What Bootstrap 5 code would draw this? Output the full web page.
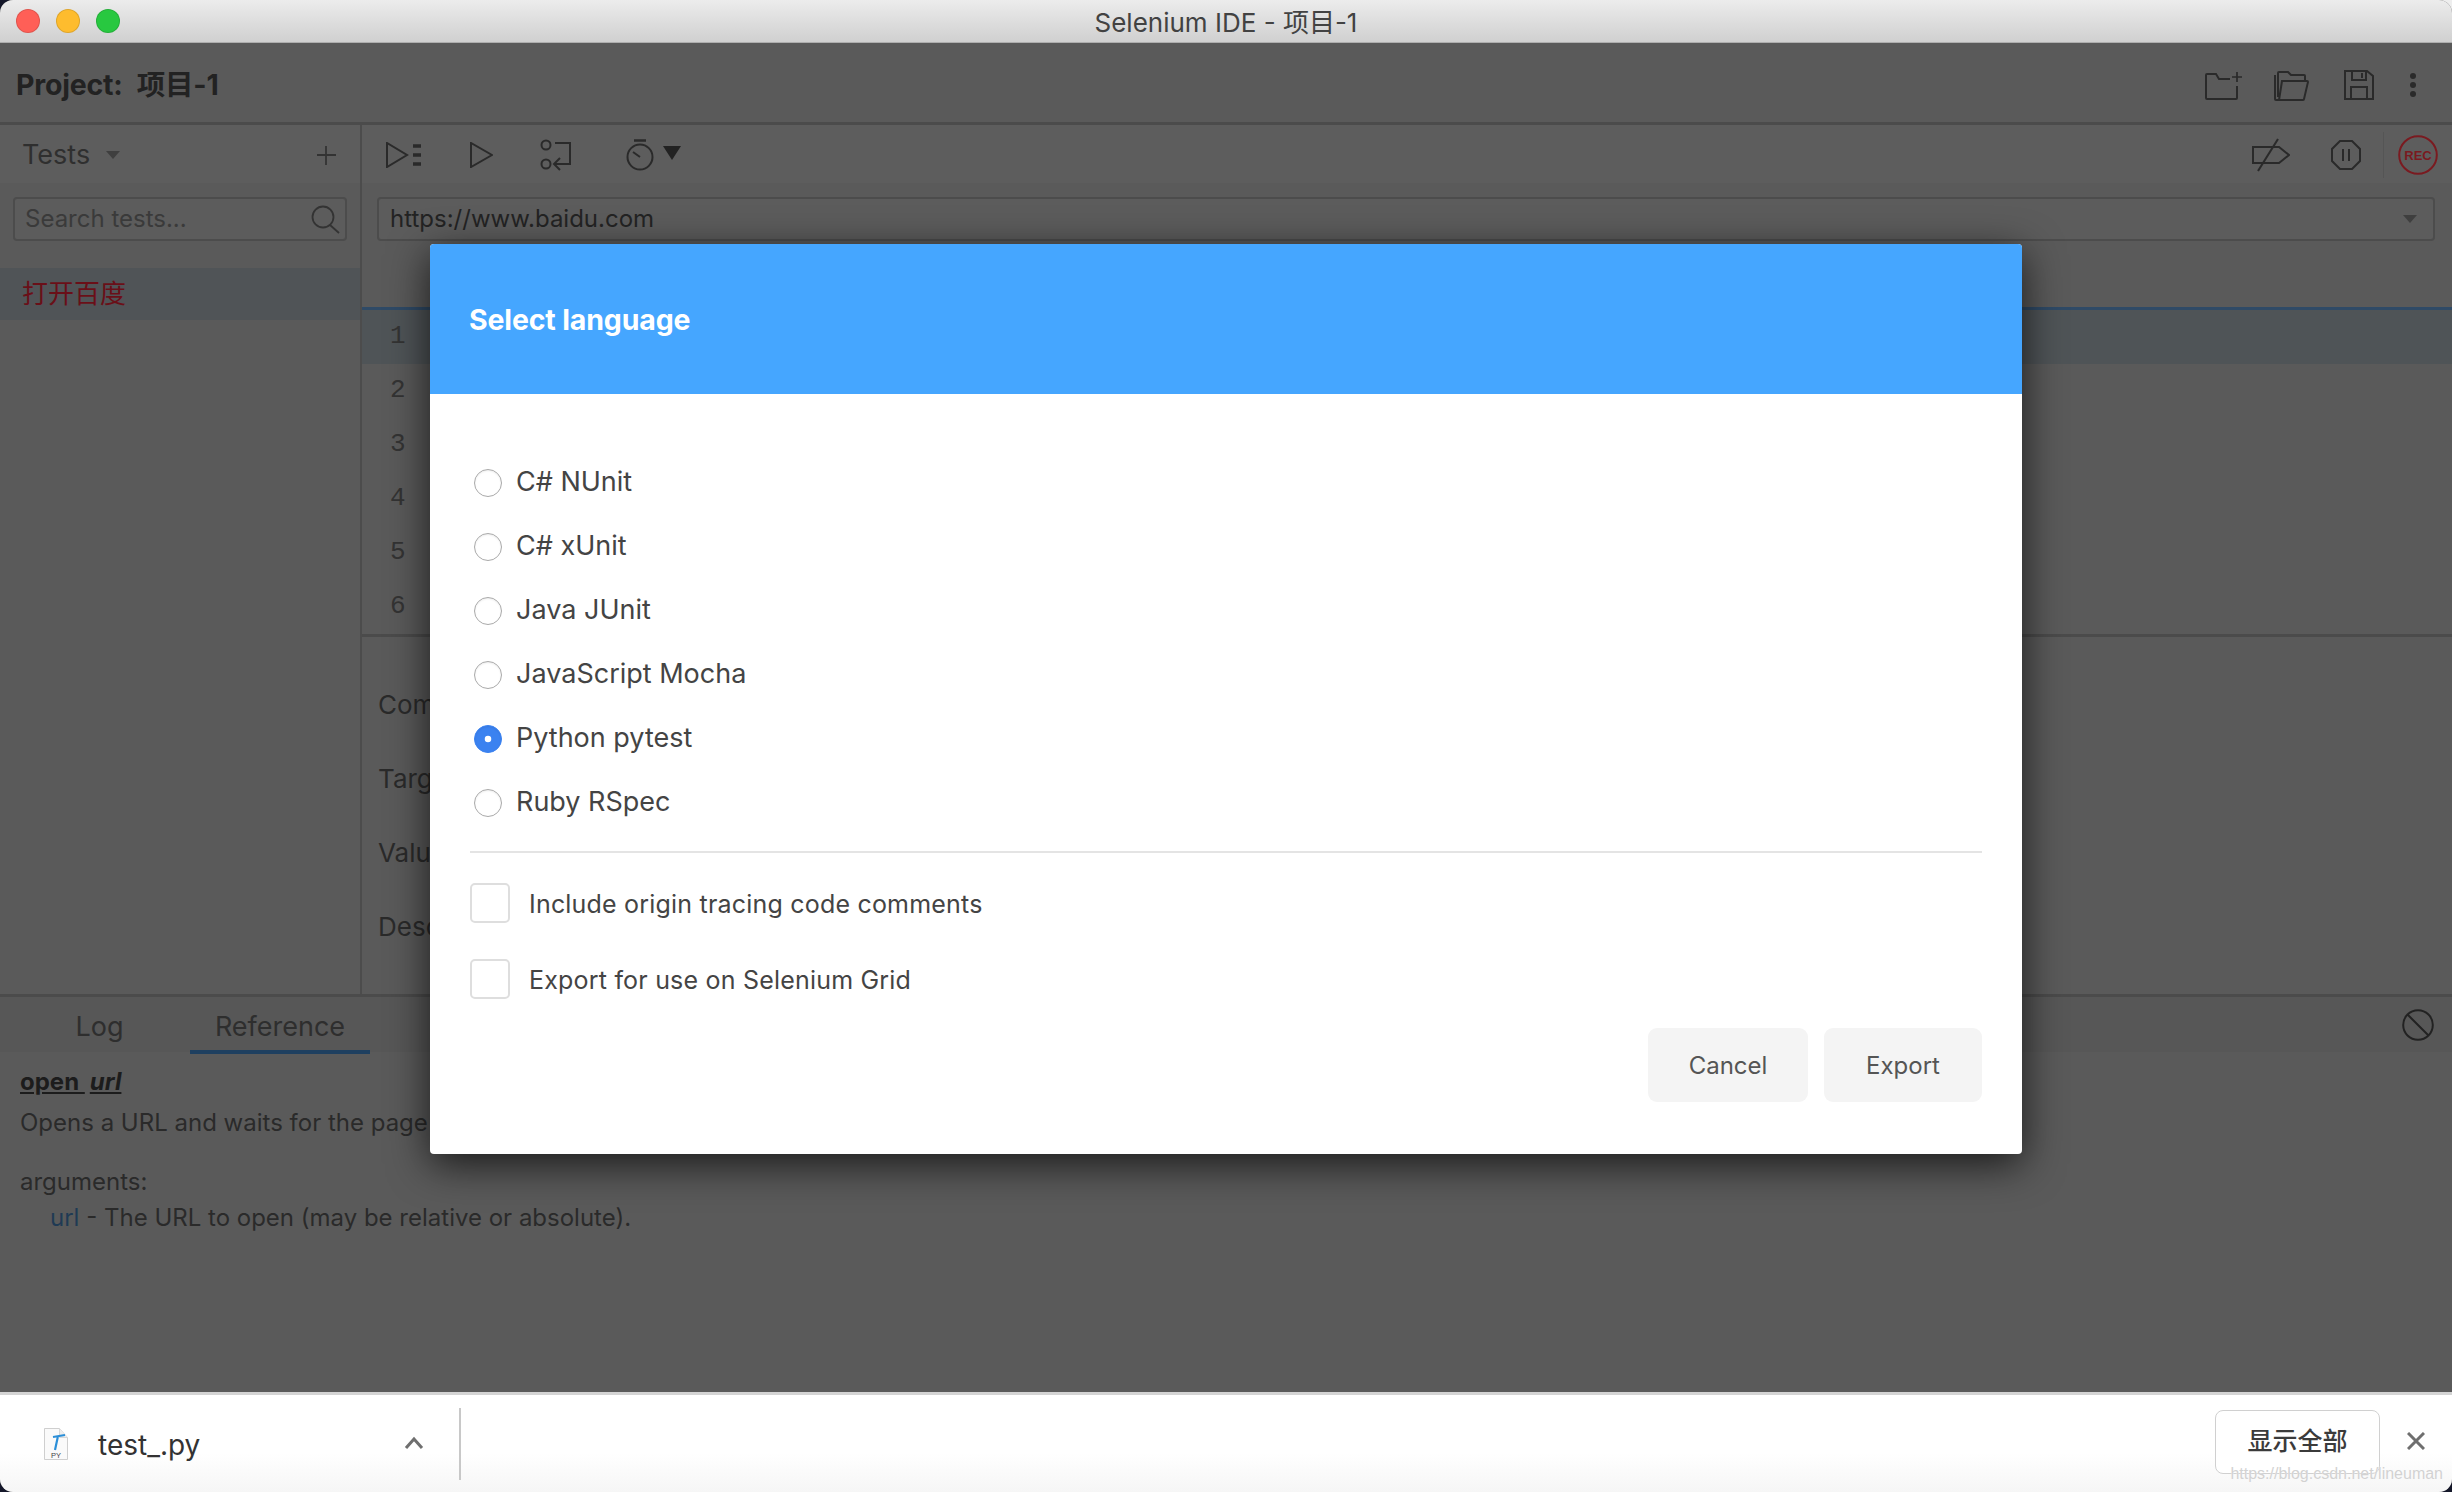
<!DOCTYPE html>
<html lang="zh">
<head>
<meta charset="utf-8">
<title>Selenium IDE - 项目-1</title>
<link href="https://cdn.jsdelivr.net/npm/bootstrap@5.3.0/dist/css/bootstrap.min.css" rel="stylesheet">
<style>
html,body{height:100%}
body{background:linear-gradient(#eee,#eee) right top/20px 20px no-repeat,#15182a;font-family:Inter,"Noto Sans CJK SC",sans-serif;overflow:hidden}
.win{width:2452px;height:1492px;border-radius:13px;overflow:hidden;background:#5a5a5a;position:relative}
.titlebar{height:43px;background:linear-gradient(#ececec,#d0d0d0);border-bottom:1px solid #aeaeae;flex:none}
.lights{width:300px;padding-left:16px;gap:16px}
.light{width:24px;height:24px;border-radius:50%;border:1px solid rgba(0,0,0,.12)}
.titletext{font-size:26px;color:#424242;line-height:43px;padding-top:2px}
.titlespacer{width:300px}
.apphead{height:82px;border-bottom:3px solid #4b4b4b;padding:5px 35px 0 16px;flex:none}
.projname{font-size:28.500px;font-weight:700;color:#222;letter-spacing:-.2px}
.projname span{margin-left:14px}
.hicons{gap:31px}
.ic-save{margin-left:4px}
.ic-dots{margin-left:4px}
.main{flex:1;min-height:0}
.side{width:362px;border-right:2px solid #4c4c4c;flex:none}
.sidebar-top{height:58px;background:#5d5d5d;padding:2px 23px 0 22px;color:#2f2f2f;font-size:27px}
.caret-s{width:0;height:0;border-left:7px solid transparent;border-right:7px solid transparent;border-top:8px solid #3f3f3f}
.inp{height:44px;border:2px solid #4c4c4c;border-radius:4px;font-size:24px;color:#2a2a2a;background:#5c5c5c;padding-top:2px}
.search-wrap{padding:14px 13px 0 13px;height:85px}
.search-in{padding:0 5px 0 10px;color:#3a3a3a}
.testrow{height:52px;background:#505457;color:#6a0f18;font-size:26px;padding-left:22px;line-height:52px}
.edit{min-width:0}
.edit-top{height:58px;background:#5d5d5d;padding:2px 14px 0 24px}
.url-wrap{padding:14px 17px 0 15px;height:67px}
.url-in{padding:0 16px 0 11px;color:#232323}
.cmdhead{height:60px;border-bottom:3px solid #2f4a66;flex:none}
.cmd-rows{height:327px;border-bottom:3px solid #4b4b4b;flex:none}
.cmdrow{height:54px;font-size:26px;color:#333;padding-left:28px;line-height:52px;font-family:"Liberation Mono",monospace}
.cmdrow.on{background:#4f5457}
.fields{padding:54px 0 0 16px;font-size:26px;color:#2a2a2a;gap:46px;line-height:28px}
.logbar{height:58px;background:#575757;border-top:3px solid #4b4b4b;flex:none;padding-right:18px}
.logtab{font-size:27px;color:#2e2e2e;height:58px;line-height:61px;text-align:center}
.logtab.first{width:160px;padding-left:39px}
.logtab.act{margin-left:30px;width:180px;border-bottom:4px solid #1f4060}
.logbody{height:340px;padding:12px 20px 0;font-size:24px;color:#2a2a2a;flex:none}
.logbody p{margin:0}
.refcmd{font-weight:700;text-decoration:underline;color:#1c1c1c;height:40px;line-height:36px}
.refcmd i{margin-left:5px}
.refline{height:38px;line-height:38px}
.logbody .refgap{margin-top:22px;height:36px;line-height:36px}
.refarg{padding-left:30px;line-height:36px}
.refarg span{color:#1f3a54}
.dlbar{height:100px;background:linear-gradient(#fff 60%,#f6f6f6);border-top:3px solid #d4d4d4;flex:none;padding:0 27px 0 44px;position:relative}
.dlname{font-size:28px;color:#333;margin-left:30px;width:306px;padding-top:2px}
.chev{margin-bottom:2px}
.dlsep{width:2px;height:72px;background:#c8c8c8;margin-left:35px}
.showall{width:165px;height:64px;border:1px solid #d0d0d0;border-radius:8px;background:#fff;font-size:25px;font-weight:500;color:#3b3b3b;line-height:57px;text-align:center;font-family:"Noto Sans CJK SC",sans-serif;margin-bottom:4px}
.closex{margin-left:27px;margin-bottom:5px}
.wm{position:absolute;right:9px;bottom:9px;font:16px "Liberation Sans",sans-serif;color:#d2d2d2;text-shadow:0 0 1px #fff}
.dlg{position:absolute;left:430px;top:244px;width:1592px;height:910px;background:#fff;border-radius:4px;overflow:hidden;box-shadow:0 10px 40px rgba(0,0,0,.72)}
.dlg-h{height:150px;background:#45a6ff;color:#fff;font-size:28.500px;font-weight:700;padding:1px 0 0 39px;line-height:150px;letter-spacing:-.15px}
.dlg-b{padding:56px 40px 0;color:#444}
.rad{height:64px;padding-left:4px;margin:0;font-size:27px;gap:14px}
.rad input.form-check-input{width:28px;height:28px;margin:2px 0 0;float:none;border:1px solid #aaa;box-shadow:inset 0 1px 2px rgba(0,0,0,.08);flex:none}
.rad input.form-check-input:checked{background-color:#3b82f0;border-color:#3b82f0;background-size:100%;background-image:url("data:image/svg+xml,%3csvg xmlns='http://www.w3.org/2000/svg' viewBox='-4 -4 8 8'%3e%3ccircle r='1' fill='%23fff'/%3e%3c/svg%3e")}
.rule{height:2px;background:#e4e4e4;margin:17px 0 30px}
.chk{height:40px;margin:0 0 36px;font-size:25px;gap:19px;letter-spacing:.2px}
.chk span{padding-top:3px}
.chk input.form-check-input{width:40px;height:40px;margin:0;float:none;border:2px solid #dedede;border-radius:5px;flex:none}
.dlg-f{gap:16px;padding-right:40px;margin-top:-7px}
.dlg-f .btn{height:74px;border:0;border-radius:9px;background:#f4f4f4;color:#555;font-size:24px;padding:2px 0 0}
.btn-c{width:160px}.btn-e{width:158px}
.recwrap{margin-left:22px;padding-left:14px;border-left:1px solid #555;height:46px}
svg{display:block;flex:none}
</style>
</head>
<body>
<div class="win d-flex flex-column">
  <div class="titlebar d-flex align-items-center">
    <div class="lights d-flex">
      <span class="light" style="background:#ff5f57"></span>
      <span class="light" style="background:#febc2e"></span>
      <span class="light" style="background:#28c840"></span>
    </div>
    <div class="titletext flex-grow-1 text-center">Selenium IDE - 项目-1</div>
    <div class="titlespacer"></div>
  </div>

  <div class="apphead d-flex align-items-center justify-content-between">
    <div class="projname">Project:<span>项目-1</span></div>
    <div class="hicons d-flex align-items-center">
      <svg width="38" height="30" viewBox="0 0 38 30" fill="none" stroke="#2a2a2a" stroke-width="2"><path d="M25 9H14l-3-5H2a1 1 0 0 0-1 1v23a1 1 0 0 0 1 1h29a1 1 0 0 0 1-1V16"/><path d="M32 2v10M27 7h10" stroke-width="1.7"/></svg>
      <svg width="35" height="31" viewBox="0 0 35 31" fill="none" stroke="#2a2a2a" stroke-width="2"><path d="M4 27V3a1 1 0 0 1 1-1h9l3 3h13a1 1 0 0 1 1 1v4"/><path d="M1 5v24a1 1 0 0 0 1 1h26"/><path d="M8 11h25a1 1 0 0 1 1 1l-4 17a1 1 0 0 1-1 1H5z"/></svg>
      <svg class="ic-save" width="30" height="30" viewBox="0 0 30 30" fill="none" stroke="#2a2a2a" stroke-width="2"><path d="M1 1h22l6 5v23H1z"/><path d="M8 1v9h14V1M18 3v5M7 29V17h16v12"/></svg>
      <svg class="ic-dots" width="8" height="26" viewBox="0 0 8 26" fill="#2a2a2a"><circle cx="4" cy="4" r="3"/><circle cx="4" cy="13" r="3"/><circle cx="4" cy="22" r="3"/></svg>
    </div>
  </div>

  <div class="main d-flex">
    <div class="side">
      <div class="sidebar-top d-flex align-items-center">
        <span>Tests</span><span class="caret-s ms-3"></span>
        <svg class="ms-auto" width="22" height="22" viewBox="0 0 22 22" stroke="#333" stroke-width="1.8"><path d="M11 2v19M2 11h19"/></svg>
      </div>
      <div class="search-wrap">
        <div class="inp search-in d-flex align-items-center justify-content-between">
          <span>Search tests...</span>
          <svg width="29" height="29" viewBox="0 0 29 29" fill="none" stroke="#333" stroke-width="1.8"><circle cx="12" cy="12" r="10.500"/><path d="M19 20l9 8"/></svg>
        </div>
      </div>
      <div class="testrow">打开百度</div>
    </div>

    <div class="edit flex-grow-1 d-flex flex-column">
      <div class="edit-top d-flex align-items-center">
        <svg width="36" height="26" viewBox="0 0 36 26" fill="none" stroke="#2a2a2a" stroke-width="2"><path d="M1 1v24l20-12z"/><path d="M27 4h8M27 13h8M27 22h8" stroke-width="3.400"/></svg>
        <svg style="margin-left:48px" width="23" height="26" viewBox="0 0 23 26" fill="none" stroke="#2a2a2a" stroke-width="2"><path d="M1 1v24l21-12z"/></svg>
        <svg style="margin-left:47px" width="32" height="32" viewBox="0 0 32 32" fill="none" stroke="#2a2a2a" stroke-width="2"><circle cx="6" cy="6" r="4.500"/><circle cx="6" cy="25" r="4.500"/><path d="M15 4h15v21H14"/><path d="M20 19l-6 6 6 6"/></svg>
        <svg style="margin-left:54px" width="28" height="32" viewBox="0 0 28 32" fill="none" stroke="#2a2a2a" stroke-width="2"><path d="M8 1.500h12" stroke-width="2.500"/><circle cx="14" cy="18" r="12.500"/><path d="M14 18l-7-5"/></svg>
        <svg style="margin-left:9px;margin-bottom:4px" width="18" height="14" viewBox="0 0 18 14" fill="#222"><path d="M0 0h18l-9 14z"/></svg>
        <svg class="ms-auto" width="38" height="34" viewBox="0 0 38 34" fill="none" stroke="#2a2a2a" stroke-width="2"><path d="M1 9h26l10 8-10 8H1z"/><path d="M26 1L6 33"/></svg>
        <svg style="margin-left:41px" width="30" height="30" viewBox="0 0 30 30" fill="none" stroke="#2a2a2a" stroke-width="2"><path d="M9 1h12l8 8v12l-8 8H9l-8-8V9z"/><path d="M12 9v12M18 9v12"/></svg>
        <div class="recwrap d-flex align-items-center">
          <svg width="40" height="40" viewBox="0 0 40 40"><circle cx="20" cy="20" r="18.800" fill="none" stroke="#7a1a20" stroke-width="2"/><text x="20" y="25" text-anchor="middle" font-family="Liberation Sans,sans-serif" font-weight="700" font-size="13" fill="#7a1a20">REC</text></svg>
        </div>
      </div>
      <div class="url-wrap">
        <div class="inp url-in d-flex align-items-center justify-content-between">
          <span>https://www.baidu.com</span>
          <span class="caret-s"></span>
        </div>
      </div>
      <div class="cmdhead"></div>
      <div class="cmd-rows">
        <div class="cmdrow on">1</div>
        <div class="cmdrow">2</div>
        <div class="cmdrow">3</div>
        <div class="cmdrow">4</div>
        <div class="cmdrow">5</div>
        <div class="cmdrow">6</div>
      </div>
      <div class="fields d-flex flex-column">
        <span>Command</span><span>Target</span><span>Value</span><span>Description</span>
      </div>
    </div>
  </div>

  <div class="logbar d-flex align-items-center">
    <div class="logtab first">Log</div>
    <div class="logtab act">Reference</div>
    <svg class="ms-auto" width="32" height="32" viewBox="0 0 32 32" fill="none" stroke="#222" stroke-width="2"><circle cx="16" cy="16" r="14.800"/><path d="M5.500 5.500l21 21"/></svg>
  </div>
  <div class="logbody">
    <div class="refcmd">open <i>url</i></div>
    <p class="refline">Opens a URL and waits for the page to load.</p>
    <p class="refgap">arguments:</p>
    <p class="refarg"><span>url</span> - The URL to open (may be relative or absolute).</p>
  </div>

  <div class="dlbar d-flex align-items-center">
    <svg width="24" height="32" viewBox="0 0 24 32"><path d="M.5.500h15l8 9v22H.5z" fill="#fafafa" stroke="#cfcfcf"/><path d="M15.500.500v9h8" fill="#eee" stroke="#d8d8d8"/><path d="M14 8l-3 14M9 9l12-2" stroke="#2b8fd8" stroke-width="2.200" fill="none"/><text x="12" y="30" text-anchor="middle" font-size="7.500" font-family="Liberation Sans,sans-serif" fill="#444">PY</text></svg>
    <div class="dlname">test_.py</div>
    <svg class="chev" width="20" height="14" viewBox="0 0 20 14" fill="none" stroke="#6f6f6f" stroke-width="3"><path d="M2 12l8-9 8 9"/></svg>
    <div class="dlsep"></div>
    <div class="showall ms-auto">显示全部</div>
    <svg class="closex" width="18" height="18" viewBox="0 0 18 18" stroke="#6f6f6f" stroke-width="3"><path d="M1 1l16 16M17 1L1 17"/></svg>
    <div class="wm">https://blog.csdn.net/lineuman</div>
  </div>

  <div class="dlg">
    <div class="dlg-h">Select language</div>
    <div class="dlg-b">
      <label class="rad d-flex align-items-center"><input class="form-check-input" type="radio" name="lang"><span>C# NUnit</span></label>
      <label class="rad d-flex align-items-center"><input class="form-check-input" type="radio" name="lang"><span>C# xUnit</span></label>
      <label class="rad d-flex align-items-center"><input class="form-check-input" type="radio" name="lang"><span>Java JUnit</span></label>
      <label class="rad d-flex align-items-center"><input class="form-check-input" type="radio" name="lang"><span>JavaScript Mocha</span></label>
      <label class="rad d-flex align-items-center"><input class="form-check-input" type="radio" name="lang" checked><span>Python pytest</span></label>
      <label class="rad d-flex align-items-center"><input class="form-check-input" type="radio" name="lang"><span>Ruby RSpec</span></label>
      <div class="rule"></div>
      <label class="chk d-flex align-items-center"><input class="form-check-input" type="checkbox"><span>Include origin tracing code comments</span></label>
      <label class="chk d-flex align-items-center"><input class="form-check-input" type="checkbox"><span>Export for use on Selenium Grid</span></label>
    </div>
    <div class="dlg-f d-flex justify-content-end">
      <button class="btn btn-c" type="button">Cancel</button>
      <button class="btn btn-e" type="button">Export</button>
    </div>
  </div>
</div>
<script src="https://cdn.jsdelivr.net/npm/bootstrap@5.3.0/dist/js/bootstrap.bundle.min.js"></script>
</body>
</html>
